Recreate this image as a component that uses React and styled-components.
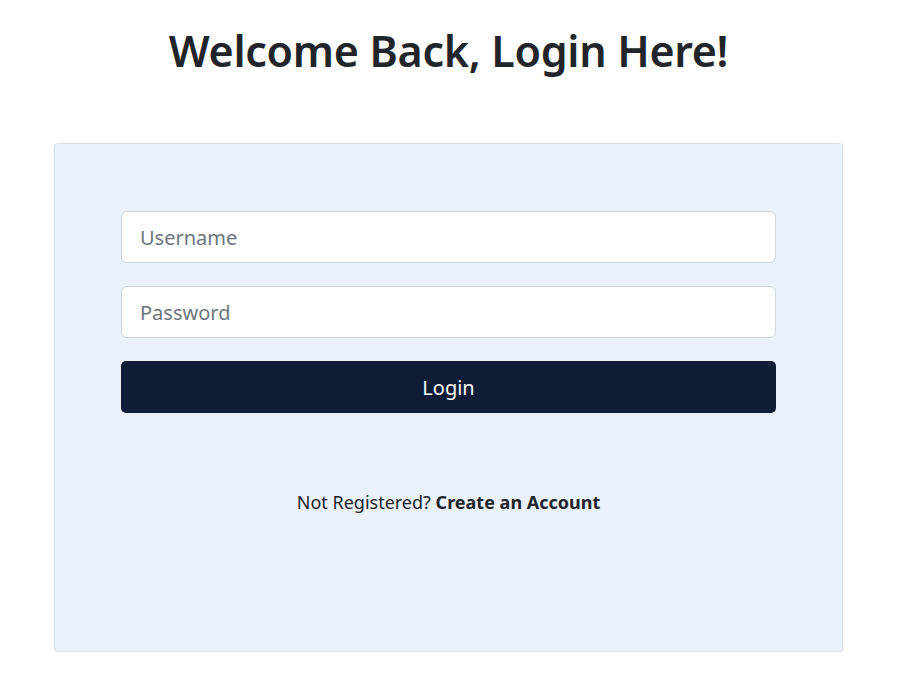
import React from 'react';
import styled, { createGlobalStyle } from 'styled-components';

const GlobalStyle = createGlobalStyle`
  * { box-sizing: border-box; }
  body {
    margin: 0;
    background: #ffffff;
    color: #212529;
    font-family: "Noto Sans", "Open Sans", sans-serif;
  }
`;

const Page = styled.div`
  display: flex;
  flex-direction: column;
  align-items: center;
  padding-top: 23px;
`;

const Title = styled.h1`
  margin: 0 0 64px;
  font-size: 43px;
  font-weight: 600;
  line-height: 56px;
  color: #212529;
  letter-spacing: -0.3px;
`;

const Card = styled.div`
  width: 789px;
  min-height: 509px;
  background: #ebf1f9;
  border: 1px solid #dde1e6;
  border-radius: 4px;
  box-shadow: 0 1px 3px rgba(0, 0, 0, 0.08);
  padding: 67px 66px 40px;
  display: flex;
  flex-direction: column;
`;

const Form = styled.form`
  display: flex;
  flex-direction: column;
  gap: 23px;
`;

const Input = styled.input`
  height: 52px;
  width: 100%;
  padding: 0 18px;
  border: 1px solid #ced4da;
  border-radius: 6px;
  background: #ffffff;
  font-family: inherit;
  font-size: 20px;
  color: #212529;
  outline: none;

  &::placeholder {
    color: #6c757d;
  }
`;

const Button = styled.button`
  height: 52px;
  width: 100%;
  border: none;
  border-radius: 5px;
  background: #0f1d37;
  color: #ffffff;
  font-family: inherit;
  font-size: 20px;
  cursor: pointer;
`;

const Footer = styled.p`
  margin: 77px 0 0;
  text-align: center;
  font-size: 18px;
  color: #212529;
`;

const Link = styled.a`
  font-weight: 700;
  color: #212529;
  text-decoration: none;
`;

export default function App() {
  return (
    <>
      <GlobalStyle />
      <Page>
        <Title>Welcome Back, Login Here!</Title>
        <Card>
          <Form onSubmit={(e) => e.preventDefault()}>
            <Input type="text" placeholder="Username" />
            <Input type="password" placeholder="Password" />
            <Button type="submit">Login</Button>
          </Form>
          <Footer>
            Not Registered? <Link href="#">Create an Account</Link>
          </Footer>
        </Card>
      </Page>
    </>
  );
}
